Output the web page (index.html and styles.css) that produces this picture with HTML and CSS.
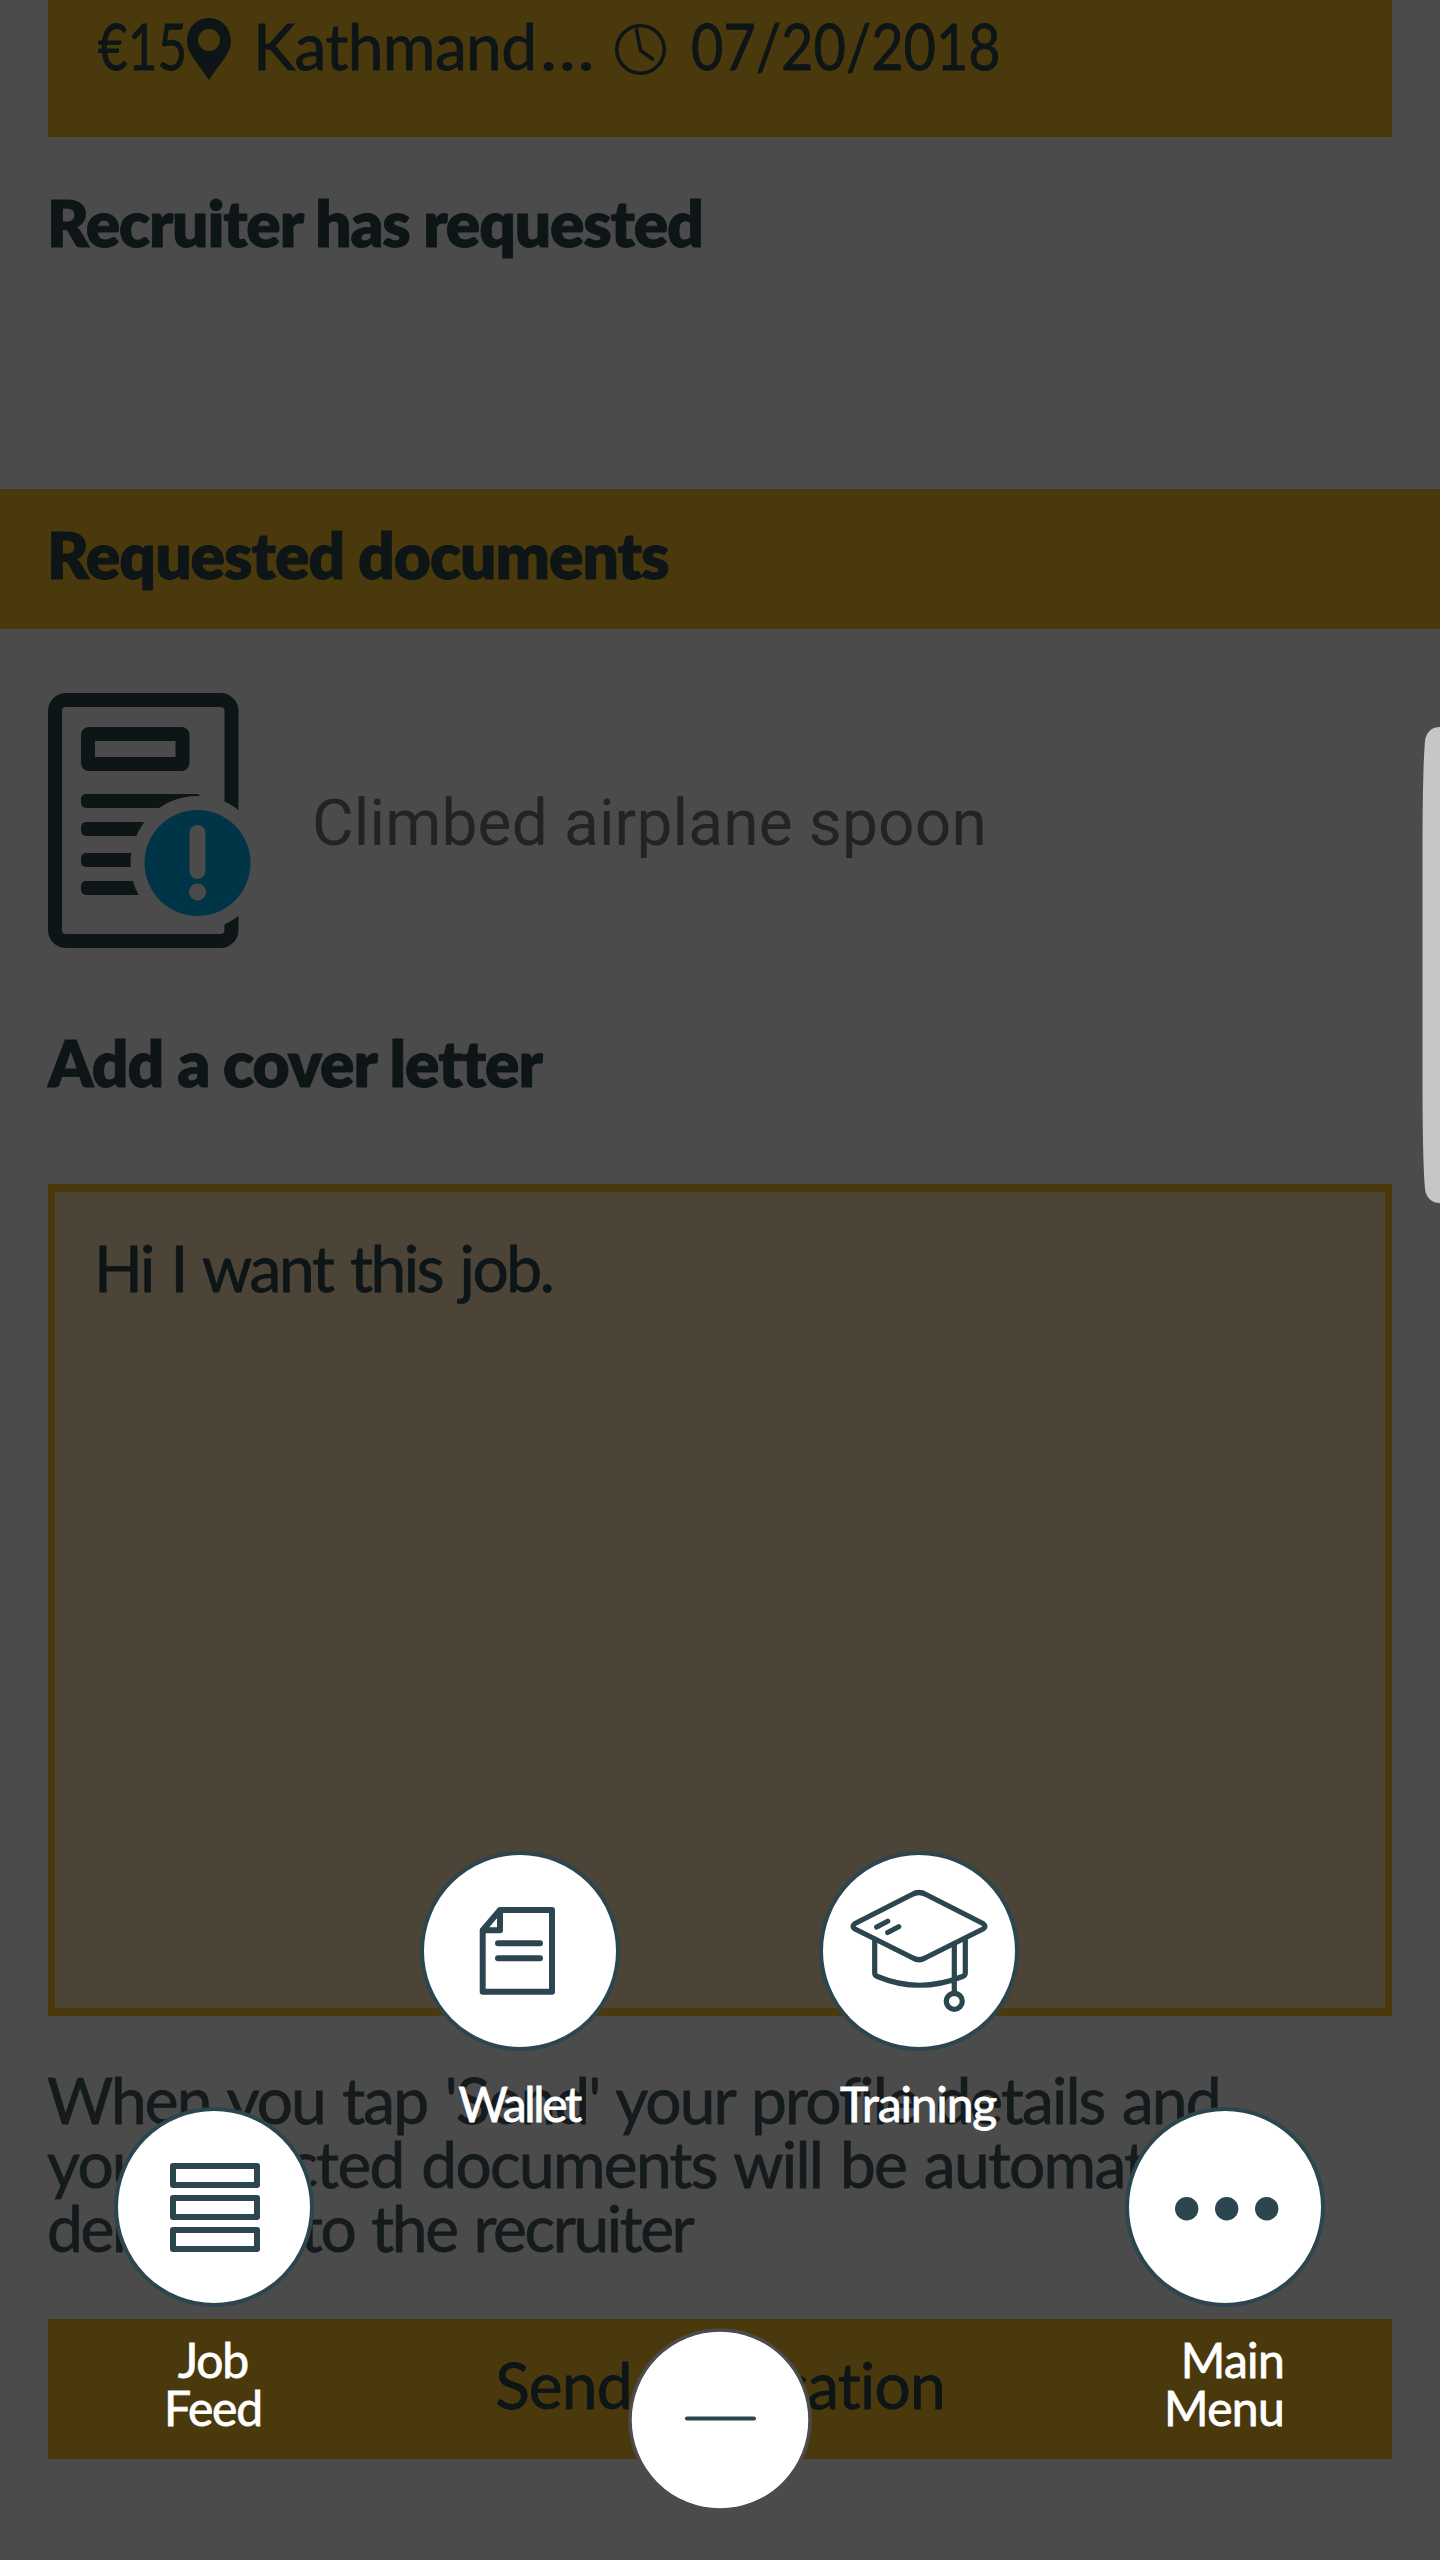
FILE: index.html
```
<!DOCTYPE html>
<html lang="en">
<head>
<meta charset="utf-8">
<title>Job application</title>
<link rel="stylesheet" href="styles.css">
</head>
<body>
<main class="page">
  <section class="job-card">
    <span class="job-pay"><span class="squeeze-pay">€15</span></span>
    <svg class="pin" viewBox="0 0 44 62"><path fill-rule="evenodd" d="M22 0C9.500 0 0 10 0 23C0 35 10 44 22 62C34 44 44 35 44 23C44 10 34.500 0 22 0ZM22 11A11 11 0 1 1 22 33A11 11 0 1 1 22 11Z"/></svg>
    <span class="job-place">Kathmand<span class="dots">…</span></span>
    <svg class="clock" viewBox="0 0 51 51"><circle cx="25.500" cy="25.500" r="23.700"/><path d="M21.600 6L25.600 26.500L37.500 35"/></svg>
    <span class="job-date"><span class="squeeze-date">07/20/2018</span></span>
  </section>

  <h2 class="heading heading-recruiter">Recruiter has requested</h2>

  <h2 class="band heading">Requested documents</h2>

  <section class="document">
    <svg class="document-icon" viewBox="0 0 204 255">
      <mask id="badge-cut"><rect width="204" height="255" fill="#fff"/><circle cx="149.500" cy="170" r="67" fill="#000"/></mask>
      <g mask="url(#badge-cut)">
        <rect class="ink-line" x="7" y="7" width="176.500" height="241" rx="11"/>
        <rect class="ink-line" x="40" y="41" width="94.500" height="30" rx="1"/>
        <rect class="ink" x="33" y="101" width="120" height="14" rx="5"/>
        <rect class="ink" x="33" y="129" width="100" height="14" rx="5"/>
        <rect class="ink" x="33" y="160" width="100" height="14" rx="5"/>
        <rect class="ink" x="33" y="188" width="100" height="14" rx="5"/>
      </g>
      <circle class="badge" cx="149.500" cy="170" r="53"/>
      <rect class="badge-mark" x="141.500" y="132" width="16" height="54" rx="8"/>
      <circle class="badge-mark" cx="149.500" cy="199" r="8.500"/>
    </svg>
    <span class="document-name">Climbed airplane spoon</span>
  </section>

  <h2 class="heading heading-cover">Add a cover letter</h2>
  <div class="letter">Hi I want this job.</div>

  <p class="note">
    <span class="note-one">When you tap 'Send' your profile details and</span>
    <span class="note-two">your selected documents will be automatically</span>
    <span class="note-three">delivered to the recruiter</span>
  </p>

  <div class="send">Send application</div>
</main>

<nav class="menu">
  <a class="item wallet">
    <svg viewBox="0 0 200 200"><circle class="disc" cx="100" cy="100" r="98"/>
      <path class="stroke6" d="M80 59H132V140.700H62.700V79.300ZM80 59V79.300H62.700M78 92.300H120M78 107.300H120"/></svg>
    <span class="label">Wallet</span>
  </a>
  <a class="item training">
    <svg viewBox="0 0 200 200"><circle class="disc" cx="100" cy="100" r="98"/>
      <path class="stroke5" d="M93 43.500Q100 39.500 107 43.500L164 72.500Q168 75.500 164 78L107 106.500Q100 111 93 106.500L36 78Q32 75.500 36 72.500Z"/>
      <path class="stroke5" d="M55.700 88V122Q55.700 124.500 58.500 125.500Q100 143 143.500 125.500Q146.300 124.500 146.300 122V88M135.300 93V142M57.700 76L68.700 70.300M68.700 81.500L79.700 75.800"/>
      <circle class="stroke5" cx="135.300" cy="150.300" r="8"/></svg>
    <span class="label">Training</span>
  </a>
  <a class="item feed">
    <svg viewBox="0 0 200 200"><circle class="disc" cx="100" cy="100" r="98"/>
      <path class="stroke6" d="M59 59H143V78H59ZM59 91H143V110H59ZM59 123H143V142H59Z"/></svg>
    <span class="label">Job<br>Feed</span>
  </a>
  <a class="item more">
    <svg viewBox="0 0 200 200"><circle class="disc" cx="100" cy="100" r="98"/>
      <g class="dot"><circle cx="61.700" cy="101.700" r="11.700"/><circle cx="101.700" cy="101.700" r="11.700"/><circle cx="141.700" cy="101.700" r="11.700"/></g></svg>
    <span class="label">Main<br>Menu</span>
  </a>
  <a class="close">
    <svg viewBox="0 0 184 184"><circle class="close-disc" cx="92" cy="92" r="90"/><path class="close-line" d="M59 90.500H126"/></svg>
  </a>
</nav>

<svg class="edge" viewBox="0 0 18 476"><path d="M18 0C9 0 4 6 3 14C1.500 30 .5 70 .5 120V356C.5 410 1.500 446 3 462C4 470 9 476 18 476Z"/></svg>
</body>
</html>
```
FILE: styles.css
```
:root {
  --ink: #0d1517;
  --gold: #4b390e;
  --teal: #2b464e;
}
* { box-sizing: border-box; }
body {
  margin: 0;
  position: relative;
  width: 1440px;
  height: 2560px;
  overflow: hidden;
  background: #4b4b4b;
  color: var(--ink);
  font: 400 64px/64px Lato, "Open Sans", sans-serif;
  white-space: nowrap;
  -webkit-text-stroke: .8px currentColor;
}
svg { display: block; flex: none; }
.page { display: flex; flex-direction: column; }

.job-card {
  display: flex;
  align-items: flex-start;
  height: 137px;
  margin: 0 48px;
  padding: 14px 0 0 50px;
  background: var(--gold);
}
.job-pay { width: 89px; }
.squeeze-pay { display: inline-block; transform: scaleX(.8); transform-origin: left; }
.pin { width: 44px; height: 62px; margin-top: 4px; fill: var(--ink); }
.job-place { width: 362px; margin-left: 22px; letter-spacing: -.600px; }
.dots { display: inline-block; margin-left: 4px; transform: scaleX(1.14); transform-origin: left; }
.clock { width: 51px; height: 51px; margin-top: 10px; fill: none; stroke: var(--ink); stroke-width: 3.600; stroke-linecap: round; stroke-linejoin: round; }
.job-date { margin-left: 25px; }
.squeeze-date { display: inline-block; transform: scaleX(.873); transform-origin: left; }

.heading { margin: 0; font-size: 64px; font-weight: 800; letter-spacing: -1px; }
.heading-recruiter { margin: 54px 47px 0; letter-spacing: -1.200px; }
.band { height: 140px; margin-top: 234px; padding: 34px 47px 0; background: var(--gold); }

.document { display: flex; margin: 64px 48px 0; }
.document-icon { width: 204px; height: 255px; }
.ink { fill: var(--ink); }
.ink-line { fill: none; stroke: var(--ink); stroke-width: 14; }
.badge { fill: #003547; }
.badge-mark { fill: #4b4b4b; }
.document-name { margin: 99px 0 0 60px; font-family: Roboto, sans-serif; letter-spacing: .150px; color: #232323; -webkit-text-stroke: 0; }

.heading-cover { margin: 83px 48px 0; }
.letter {
  height: 832px;
  margin: 89px 48px 0;
  padding: 44px 39px;
  border: solid var(--gold);
  border-width: 8px 7px;
  background: #4b4437;
  letter-spacing: -2.400px;
  word-spacing: 3.500px;
}
.note { display: flex; flex-direction: column; margin: 52px 47px 0; color: #151b1d; word-spacing: 3px; }
.note-one { letter-spacing: -1.900px; }
.note-two { letter-spacing: -1.700px; }
.note-three { letter-spacing: -2.400px; }
.send {
  height: 140px;
  margin: 59px 48px 0;
  padding-top: 34px;
  background: var(--gold);
  text-align: center;
  letter-spacing: -.800px;
}

.menu { position: absolute; inset: 0; color: #fff; font-size: 48px; line-height: 48px; }
.item { position: absolute; display: flex; flex-direction: column; gap: 29px; width: 200px; text-align: center; }
.item svg { width: 200px; height: 200px; }
.wallet { left: 419px; top: 1851px; letter-spacing: -2.400px; }
.training { left: 818px; top: 1851px; letter-spacing: -1.200px; }
.wallet svg, .training svg { margin-left: 1px; }
.feed { left: 114px; top: 2107px; letter-spacing: -1.200px; }
.feed .label { margin-right: 2px; }
.more { left: 1125px; top: 2107px; text-align: right; letter-spacing: -.700px; }
.more .label { padding-right: 41px; }
.disc { fill: #fff; stroke: var(--teal); stroke-width: 4; }
.stroke6, .stroke5 { fill: none; stroke: var(--teal); stroke-linecap: round; stroke-linejoin: round; }
.stroke6 { stroke-width: 6; }
.stroke5 { stroke-width: 5.200; }
.dot { fill: var(--teal); }
.close { position: absolute; left: 628px; top: 2328px; }
.close svg { width: 184px; height: 184px; }
.close-disc { fill: #fff; stroke: #4b4b4b; stroke-width: 3.500; }
.close-line { stroke: var(--teal); stroke-width: 4.200; stroke-linecap: round; }

.edge { position: absolute; right: 0; top: 727px; width: 18px; height: 476px; fill: #c6c6c6; }
```
